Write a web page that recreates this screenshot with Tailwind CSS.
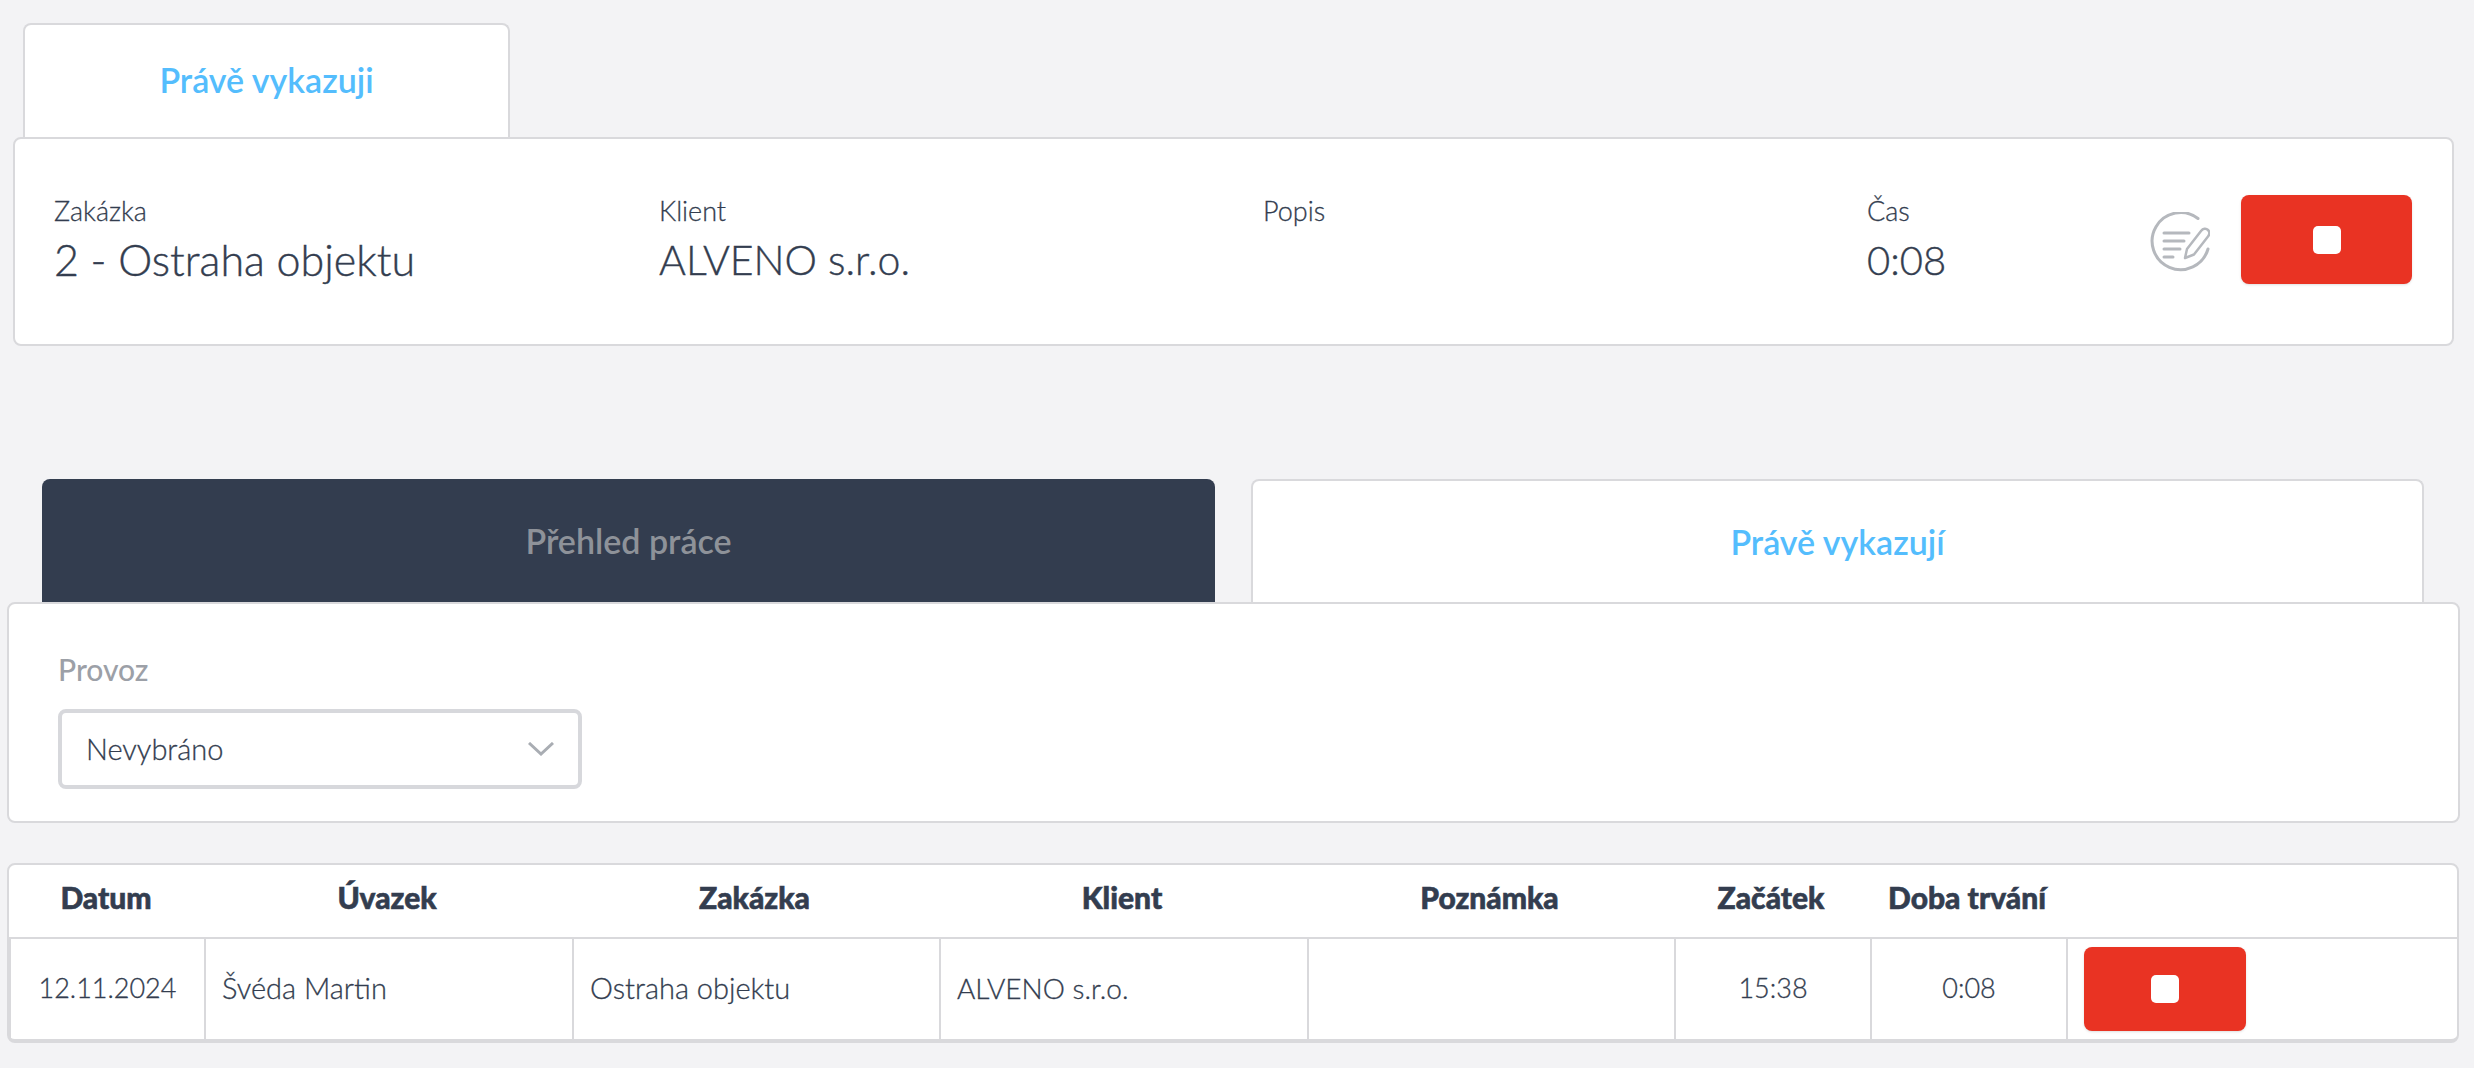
<!DOCTYPE html>
<html lang="cs">
<head>
<meta charset="utf-8">
<script src="https://cdn.jsdelivr.net/npm/@tailwindcss/browser@4"></script>
<title>Právě vykazuji</title>
</head>
<body class="bg-[#f3f3f5] font-['Lato','Noto_Sans',sans-serif] text-[#333d4f] w-[2474px] h-[1068px] overflow-hidden">
  <div class="pt-[23px] pl-[23px]">
    <div class="w-[487px] h-[116px] bg-white border-2 border-[#d9d9dc] border-b-0 rounded-t-lg flex items-center justify-center text-[#54bdfd] text-[34px] font-semibold pb-[6px]">Právě vykazuji</div>
  </div>
  <div class="ml-[13px] w-[2441px] h-[209px] -mt-[2px] relative bg-white border-2 border-[#d9d9dc] rounded-lg flex items-center pl-[39px]">
    <div class="w-[605px] pb-[3px]"><div class="text-[27px] leading-[32px] font-light [-webkit-text-stroke:0.3px]">Zakázka</div><div class="mt-[8px] text-[43px] leading-[50px] font-light [-webkit-text-stroke:0.4px]">2 - Ostraha objektu</div></div>
    <div class="w-[604px] pb-[3px]"><div class="text-[27px] leading-[32px] font-light [-webkit-text-stroke:0.3px]">Klient</div><div class="mt-[8px] text-[41px] leading-[50px] font-light [-webkit-text-stroke:0.4px]">ALVENO s.r.o.</div></div>
    <div class="w-[604px] h-[93px] pb-[3px]"><div class="text-[27px] leading-[32px] font-light [-webkit-text-stroke:0.3px]">Popis</div></div>
    <div class="w-[283px] pb-[3px]"><div class="text-[27px] leading-[32px] font-light [-webkit-text-stroke:0.3px]">Čas</div><div class="mt-[8px] text-[40px] leading-[50px] font-light [-webkit-text-stroke:0.4px]">0:08</div></div>
    <svg class="w-[60px] h-[60px] shrink-0" viewBox="0 0 60 60" fill="none" stroke="#b5b8bd" stroke-width="3" stroke-linecap="round">
      <path d="M48 6.500A28.500 28.500 0 1 0 58 37"/>
      <path d="M14 21H39M14 29H34M14 37H30M14 45H23"/>
      <path stroke-width="2.500" stroke-linejoin="round" d="M35 46L37 37L51 19C53 16.500 56 16 58 18C60 20 60 22 58 24.500L44 42.500Z"/>
    </svg>
    <button class="ml-[31px] mb-[4px] w-[171px] h-[89px] rounded-lg bg-[#e93323] shadow-sm flex items-center justify-center"><span class="block w-[28px] h-[28px] bg-white rounded-[5px]"></span></button>
  </div>

  <div class="mt-[133px] pl-[42px] flex gap-[36px] relative">
    <div class="w-[1173px] h-[125px] bg-[#333d4f] rounded-t-lg flex items-center justify-center text-[#8e9299] text-[34px] font-semibold pb-[2px]">Přehled práce</div>
    <div class="w-[1173px] h-[125px] bg-white border-2 border-[#d9d9dc] border-b-0 rounded-t-lg flex items-center justify-center text-[#54bdfd] text-[34px] font-semibold pb-[2px]">Právě vykazují</div>
  </div>
  <div class="ml-[7px] w-[2453px] h-[221px] -mt-[2px] relative bg-white border-2 border-[#d9d9dc] rounded-lg pl-[49px] pt-[47px]">
    <div class="text-[30px] leading-[36px] font-medium text-[#9ca0a7]">Provoz</div>
    <div class="mt-[22px] w-[524px] h-[80px] border-4 border-[#d7d8dc] rounded-lg flex items-center justify-between pl-[24px] pr-[24px]">
      <span class="text-[29px] font-light [-webkit-text-stroke:0.3px]">Nevybráno</span>
      <svg class="w-[26px] h-[14px]" viewBox="0 0 26 14" fill="none" stroke="#a9adb3" stroke-width="3"><path d="M1 1L13 12L25 1"/></svg>
    </div>
  </div>

  <div class="ml-[7px] mt-[40px] w-[2452px] h-[180px] bg-white border-2 border-b-4 border-[#d9d9dc] rounded-lg">
    <div class="grid grid-cols-[194px_368px_367px_368px_367px_196px_196px_1fr] h-[74px] border-b-2 border-[#d9d9dc] items-center text-center text-[30px] font-black [-webkit-text-stroke:0.6px] pb-[7px]">
      <div>Datum</div><div>Úvazek</div><div>Zakázka</div><div>Klient</div><div>Poznámka</div><div>Začátek</div><div>Doba trvání</div><div></div>
    </div>
    <div class="grid grid-cols-[195px_368px_367px_368px_367px_196px_196px_1fr] h-[100px] text-[29px] font-light [-webkit-text-stroke:0.3px] border-l-2 border-[#d9d9dc]">
      <div class="flex items-center justify-center border-r-2 border-[#d9d9dc] text-[27px] pb-[2px]">12.11.2024</div>
      <div class="flex items-center pl-[16px] border-r-2 border-[#d9d9dc] pb-[2px]">Švéda Martin</div>
      <div class="flex items-center pl-[16px] border-r-2 border-[#d9d9dc] pb-[2px]">Ostraha objektu</div>
      <div class="flex items-center pl-[16px] border-r-2 border-[#d9d9dc] pb-[2px] text-[28px]">ALVENO s.r.o.</div>
      <div class="border-r-2 border-[#d9d9dc]"></div>
      <div class="flex items-center justify-center border-r-2 border-[#d9d9dc] text-[27px] pb-[2px]">15:38</div>
      <div class="flex items-center justify-center border-r-2 border-[#d9d9dc] text-[27px] pb-[2px]">0:08</div>
      <div class="pl-[16px] pt-[8px]"><button class="w-[162px] h-[84px] rounded-lg bg-[#e93323] shadow-sm flex items-center justify-center"><span class="block w-[28px] h-[28px] bg-white rounded-[5px]"></span></button></div>
    </div>
  </div>
</body>
</html>
